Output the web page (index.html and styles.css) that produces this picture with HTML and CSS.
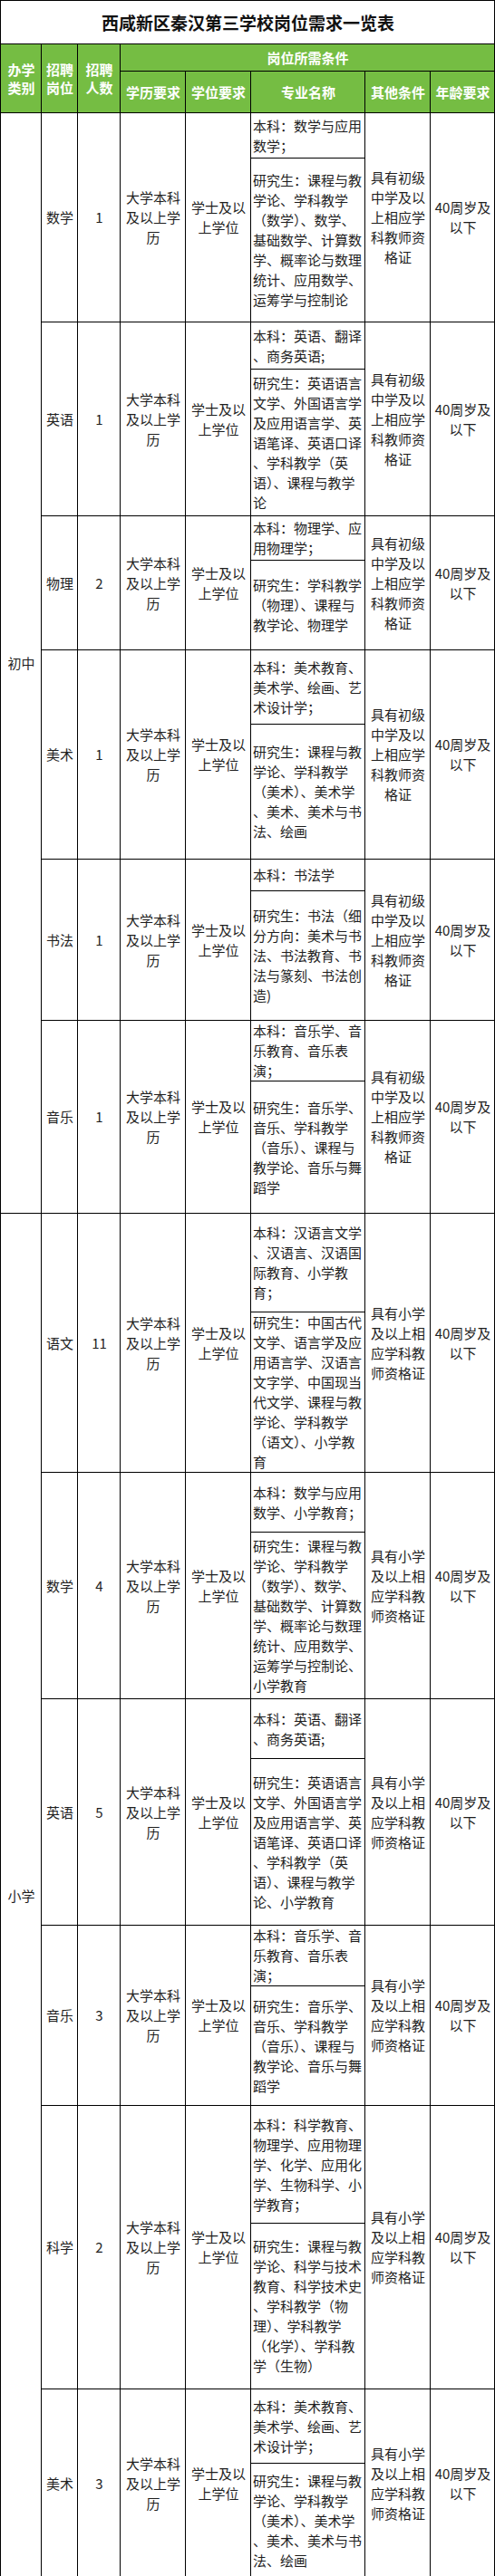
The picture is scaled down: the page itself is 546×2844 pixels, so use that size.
FILE: index.html
```html
<!DOCTYPE html>
<html lang="zh-CN">
<head>
<meta charset="utf-8">
<title>西咸新区秦汉第三学校岗位需求一览表</title>
<link rel="stylesheet" href="styles.css">
</head>
<body>
<table class="jobs">
<colgroup>
<col class="c-type"><col class="c-post"><col class="c-num"><col class="c-edu"><col class="c-deg"><col class="c-major"><col class="c-other"><col class="c-age">
</colgroup>
<thead>
<tr class="r-title"><th colspan="8" class="title">西咸新区秦汉第三学校岗位需求一览表</th></tr>
<tr class="r-h1"><th rowspan="2">办学<br>类别</th><th rowspan="2">招聘<br>岗位</th><th rowspan="2">招聘<br>人数</th><th colspan="5">岗位所需条件</th></tr>
<tr class="r-h2"><th>学历要求</th><th>学位要求</th><th>专业名称</th><th>其他条件</th><th>年龄要求</th></tr>
</thead>
<tbody>
<tr class="h50">
<td rowspan="12">初中</td>
<td rowspan="2">数学</td>
<td rowspan="2">1</td>
<td rowspan="2">大学本科<br>及以上学<br>历</td>
<td rowspan="2">学士及以<br>上学位</td>
<td class="major">本科：数学与应用<br>数学；</td>
<td rowspan="2">具有初级<br>中学及以<br>上相应学<br>科教师资<br>格证</td>
<td rowspan="2">40周岁及<br>以下</td>
</tr>
<tr class="h181"><td class="major">研究生：课程与教<br>学论、学科教学<br>（数学）、数学、<br>基础数学、计算数<br>学、概率论与数理<br>统计、应用数学、<br>运筹学与控制论</td></tr>

<tr class="h52">
<td rowspan="2">英语</td>
<td rowspan="2">1</td>
<td rowspan="2">大学本科<br>及以上学<br>历</td>
<td rowspan="2">学士及以<br>上学位</td>
<td class="major">本科：英语、翻译<br>、商务英语;</td>
<td rowspan="2">具有初级<br>中学及以<br>上相应学<br>科教师资<br>格证</td>
<td rowspan="2">40周岁及<br>以下</td>
</tr>
<tr class="h162"><td class="major">研究生：英语语言<br>文学、外国语言学<br>及应用语言学、英<br>语笔译、英语口译<br>、学科教学（英<br>语）、课程与教学<br>论</td></tr>

<tr class="h49">
<td rowspan="2">物理</td>
<td rowspan="2">2</td>
<td rowspan="2">大学本科<br>及以上学<br>历</td>
<td rowspan="2">学士及以<br>上学位</td>
<td class="major">本科：物理学、应<br>用物理学；</td>
<td rowspan="2">具有初级<br>中学及以<br>上相应学<br>科教师资<br>格证</td>
<td rowspan="2">40周岁及<br>以下</td>
</tr>
<tr class="h99"><td class="major">研究生：学科教学<br>（物理）、课程与<br>教学论、物理学</td></tr>

<tr class="h82">
<td rowspan="2">美术</td>
<td rowspan="2">1</td>
<td rowspan="2">大学本科<br>及以上学<br>历</td>
<td rowspan="2">学士及以<br>上学位</td>
<td class="major">本科：美术教育、<br>美术学、绘画、艺<br>术设计学；</td>
<td rowspan="2">具有初级<br>中学及以<br>上相应学<br>科教师资<br>格证</td>
<td rowspan="2">40周岁及<br>以下</td>
</tr>
<tr class="h149"><td class="major">研究生：课程与教<br>学论、学科教学<br>（美术）、美术学<br>、美术、美术与书<br>法、绘画</td></tr>

<tr class="h35">
<td rowspan="2">书法</td>
<td rowspan="2">1</td>
<td rowspan="2">大学本科<br>及以上学<br>历</td>
<td rowspan="2">学士及以<br>上学位</td>
<td class="major">本科：书法学</td>
<td rowspan="2">具有初级<br>中学及以<br>上相应学<br>科教师资<br>格证</td>
<td rowspan="2">40周岁及<br>以下</td>
</tr>
<tr class="h143"><td class="major">研究生：书法（细<br>分方向：美术与书<br>法、书法教育、书<br>法与篆刻、书法创<br>造)</td></tr>

<tr class="h66">
<td rowspan="2">音乐</td>
<td rowspan="2">1</td>
<td rowspan="2">大学本科<br>及以上学<br>历</td>
<td rowspan="2">学士及以<br>上学位</td>
<td class="major">本科：音乐学、音<br>乐教育、音乐表<br>演；</td>
<td rowspan="2">具有初级<br>中学及以<br>上相应学<br>科教师资<br>格证</td>
<td rowspan="2">40周岁及<br>以下</td>
</tr>
<tr class="h146"><td class="major">研究生：音乐学、<br>音乐、学科教学<br>（音乐）、课程与<br>教学论、音乐与舞<br>蹈学</td></tr>

<tr class="h109">
<td rowspan="12">小学</td>
<td rowspan="2">语文</td>
<td rowspan="2">11</td>
<td rowspan="2">大学本科<br>及以上学<br>历</td>
<td rowspan="2">学士及以<br>上学位</td>
<td class="major">本科：汉语言文学<br>、汉语言、汉语国<br>际教育、小学教<br>育；</td>
<td rowspan="2">具有小学<br>及以上相<br>应学科教<br>师资格证</td>
<td rowspan="2">40周岁及<br>以下</td>
</tr>
<tr class="h176"><td class="major">研究生：中国古代<br>文学、语言学及应<br>用语言学、汉语言<br>文字学、中国现当<br>代文学、课程与教<br>学论、学科教学<br>（语文）、小学教<br>育</td></tr>

<tr class="h66">
<td rowspan="2">数学</td>
<td rowspan="2">4</td>
<td rowspan="2">大学本科<br>及以上学<br>历</td>
<td rowspan="2">学士及以<br>上学位</td>
<td class="major">本科：数学与应用<br>数学、小学教育；</td>
<td rowspan="2">具有小学<br>及以上相<br>应学科教<br>师资格证</td>
<td rowspan="2">40周岁及<br>以下</td>
</tr>
<tr class="h184"><td class="major">研究生：课程与教<br>学论、学科教学<br>（数学）、数学、<br>基础数学、计算数<br>学、概率论与数理<br>统计、应用数学、<br>运筹学与控制论、<br>小学教育</td></tr>

<tr class="h66">
<td rowspan="2">英语</td>
<td rowspan="2">5</td>
<td rowspan="2">大学本科<br>及以上学<br>历</td>
<td rowspan="2">学士及以<br>上学位</td>
<td class="major">本科：英语、翻译<br>、商务英语;</td>
<td rowspan="2">具有小学<br>及以上相<br>应学科教<br>师资格证</td>
<td rowspan="2">40周岁及<br>以下</td>
</tr>
<tr class="h184"><td class="major">研究生：英语语言<br>文学、外国语言学<br>及应用语言学、英<br>语笔译、英语口译<br>、学科教学（英<br>语）、课程与教学<br>论、小学教育</td></tr>

<tr class="h67">
<td rowspan="2">音乐</td>
<td rowspan="2">3</td>
<td rowspan="2">大学本科<br>及以上学<br>历</td>
<td rowspan="2">学士及以<br>上学位</td>
<td class="major">本科：音乐学、音<br>乐教育、音乐表<br>演；</td>
<td rowspan="2">具有小学<br>及以上相<br>应学科教<br>师资格证</td>
<td rowspan="2">40周岁及<br>以下</td>
</tr>
<tr class="h132"><td class="major">研究生：音乐学、<br>音乐、学科教学<br>（音乐）、课程与<br>教学论、音乐与舞<br>蹈学</td></tr>

<tr class="h130">
<td rowspan="2">科学</td>
<td rowspan="2">2</td>
<td rowspan="2">大学本科<br>及以上学<br>历</td>
<td rowspan="2">学士及以<br>上学位</td>
<td class="major">本科：科学教育、<br>物理学、应用物理<br>学、化学、应用化<br>学、生物科学、小<br>学教育；</td>
<td rowspan="2">具有小学<br>及以上相<br>应学科教<br>师资格证</td>
<td rowspan="2">40周岁及<br>以下</td>
</tr>
<tr class="h183"><td class="major">研究生：课程与教<br>学论、科学与技术<br>教育、科学技术史<br>、学科教学（物<br>理）、学科教学<br>（化学）、学科教<br>学（生物）</td></tr>

<tr class="h82">
<td rowspan="2">美术</td>
<td rowspan="2">3</td>
<td rowspan="2">大学本科<br>及以上学<br>历</td>
<td rowspan="2">学士及以<br>上学位</td>
<td class="major">本科：美术教育、<br>美术学、绘画、艺<br>术设计学；</td>
<td rowspan="2">具有小学<br>及以上相<br>应学科教<br>师资格证</td>
<td rowspan="2">40周岁及<br>以下</td>
</tr>
<tr class="h126"><td class="major">研究生：课程与教<br>学论、学科教学<br>（美术）、美术学<br>、美术、美术与书<br>法、绘画</td></tr>
</tbody>
</table>
</body>
</html>
```

FILE: styles.css
```css
html, body {
  margin: 0;
  padding: 0;
  background: #ffffff;
}

body {
  font-family: "Noto Sans CJK SC", "Noto Sans", sans-serif;
  color: #1e1e1e;
}

.jobs {
  border-collapse: collapse;
  table-layout: fixed;
  width: 546px;
  font-size: 15px;
  line-height: 22px;
}

.c-type  { width: 45px; }
.c-post  { width: 40px; }
.c-num   { width: 47px; }
.c-edu   { width: 72px; }
.c-deg   { width: 72px; }
.c-major { width: 126px; }
.c-other { width: 72px; }
.c-age   { width: 71px; }

.jobs th,
.jobs td {
  border: 1px solid #000000;
  padding: 0 1px 0 2px;
  text-align: center;
  vertical-align: middle;
  white-space: nowrap;
  overflow: hidden;
}

.jobs thead th {
  background: #75bd43;
  color: #ffffff;
  font-weight: bold;
  line-height: 20px;
}

.jobs thead .title {
  background: #ffffff;
  color: #111111;
  font-size: 19px;
  line-height: 24px;
}

.jobs td.major {
  text-align: left;
}

.r-title { height: 48px; }
.r-h1 { height: 30px; }
.r-h2 { height: 46px; }

.h35 { height: 35px; }
.h49 { height: 49px; }
.h50 { height: 50px; }
.h52 { height: 52px; }
.h66 { height: 66px; }
.h67 { height: 67px; }
.h82 { height: 82px; }
.h99 { height: 99px; }
.h109 { height: 109px; }
.h126 { height: 126px; }
.h130 { height: 130px; }
.h132 { height: 132px; }
.h143 { height: 143px; }
.h146 { height: 146px; }
.h149 { height: 149px; }
.h162 { height: 162px; }
.h176 { height: 176px; }
.h181 { height: 181px; }
.h183 { height: 183px; }
.h184 { height: 184px; }
```
